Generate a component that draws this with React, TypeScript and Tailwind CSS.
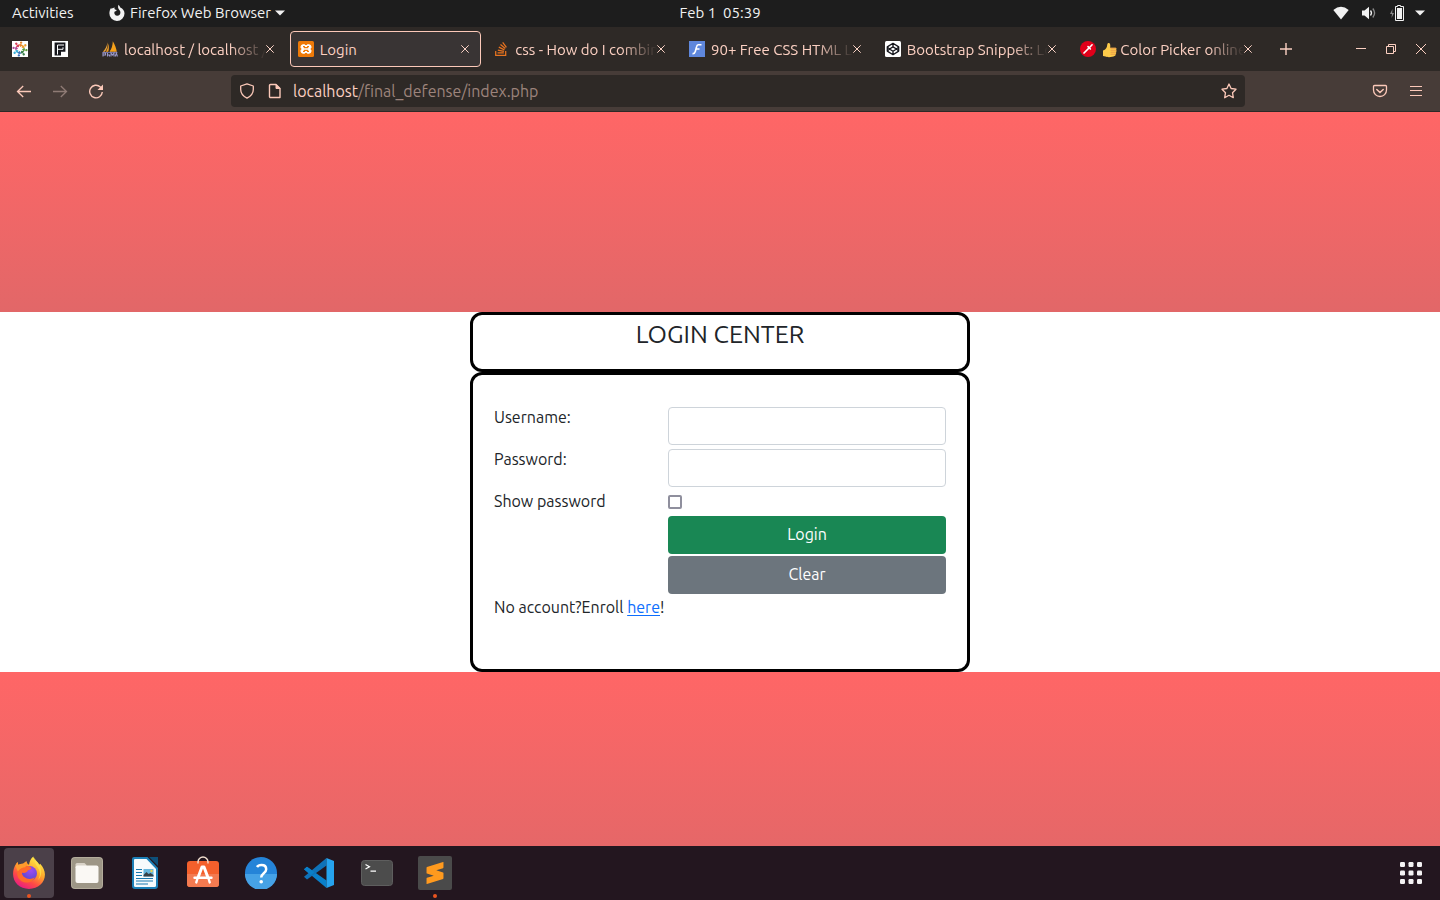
import { useState } from "react";
import type { ReactNode } from "react";
import { FaStackOverflow } from "react-icons/fa";
import { SiSublimetext } from "react-icons/si";

/* ---------- favicons ---------- */

function SlackWheelIcon() {
  const colors = ["#e8862a", "#f0a030", "#5a9a3a", "#3a7f4a", "#3a6fb8", "#3fb0d8", "#b04a9a", "#d8405a"];
  return (
    <svg viewBox="0 0 16 16" className="size-4">
      <rect width="16" height="16" fill="#fff" />
      {colors.map((c, i) => (
        <g key={c} transform={`rotate(${i * 45 + 10} 8 8)`}>
          <path d="M8 6 5.900 3.800 8 2.900l2 .9Z" fill={c} />
          <circle cx="8" cy="1.500" r="1.200" fill={c} />
        </g>
      ))}
    </svg>
  );
}

function LetterFIcon() {
  return (
    <svg viewBox="0 0 16 16" className="size-4">
      <rect width="16" height="16" fill="#fff" />
      <path d="M2.600 1.600h10.800v9.200h-4.400v3.600H2.600Z" fill="#17171c" />
      <path d="M5.500 13.500V4h6.500M5.500 8.300h5.500v-2" fill="none" stroke="#fff" strokeWidth="1" />
    </svg>
  );
}

function SailIcon() {
  return (
    <svg viewBox="0 0 16 16" className="size-4">
      <path d="M5.500 1.200C5.800 4 5.400 8 3 10.800H.8C3.400 8.400 5 5 5.500 1.200Z" fill="#e8a23a" />
      <path d="M6.200 2.500c1 3 .8 6 0 8.300H3.800C5.400 8.500 6.200 5.500 6.200 2.500Z" fill="#f29c1f" />
      <path d="M10.800.2c2 3.400 3.600 7 4 10.600H7.500C9.600 8 10.800 4 10.800.2Z" fill="#f6a11a" />
      <path d="M.5 11.500h15" stroke="#6c6b9c" strokeWidth="1" />
      <path d="M1 15.500v-3.500h2.500v2H1M5.500 12v3.500M5.500 14h2v1.500M9 15.500v-3.500l1.500 2 1.500-2v3.500M13.200 15.500l1.200-3.500 1 3.500" fill="none" stroke="#9a98c8" strokeWidth="1.100" />
    </svg>
  );
}

function XamppIcon() {
  return (
    <svg viewBox="0 0 16 16" className="size-4">
      <rect width="16" height="16" rx="1.500" fill="#ee7a08" />
      <path d="M5 3.800h1.600L8 5l1.400-1.200H11a2 2 0 0 1 2 2v.7L11.800 8 13 9.500v.7a2 2 0 0 1-2 2H9.400L8 11l-1.400 1.200H5a2 2 0 0 1-2-2v-.7L4.200 8 3 6.500v-.7a2 2 0 0 1 2-2Z" fill="#fff" stroke="#fff" strokeWidth="1" />
      <path d="M5 5.500h1.300v1.200h3.400V5.500H11M5 10.500h1.300V9.300h3.400v1.200H11" fill="none" stroke="#f07a05" strokeWidth="1.200" />
    </svg>
  );
}

function ScriptFIcon() {
  return (
    <svg viewBox="0 0 16 16" className="size-4">
      <rect width="16" height="16" fill="#5f87dc" />
      <path d="M12.500 3.800H9.200Q8 3.800 7.500 6L6.300 10.500Q5.700 12.800 3.500 12.600M6.500 8h4" fill="none" stroke="#fff" strokeWidth="1.600" />
    </svg>
  );
}

function CodepenIcon() {
  return (
    <svg viewBox="0 0 16 16" className="size-4">
      <rect width="16" height="16" rx="1.500" fill="#fff" />
      <path d="m8 2.300 5.700 3.600v4.200L8 13.700l-5.700-3.600V5.900Zm0 3.600L11.500 8 8 10.200 4.500 8Zm0-3.600v3.600m0 4.300v3.500M2.300 5.900 4.500 8l-2.200 2.100M13.700 5.900 11.500 8l2.200 2.100" fill="none" stroke="#15161c" strokeWidth="1.300" strokeLinejoin="round" />
    </svg>
  );
}

function DropperIcon() {
  return (
    <svg viewBox="0 0 16 16" className="size-4">
      <circle cx="8" cy="8" r="8" fill="#e1001a" />
      <path d="M4 12 9 7" stroke="#fff" strokeWidth="1.700" strokeLinecap="round" />
      <path d="m8 5.600 2.400 2.400M9.800 6.200l2.300-2.400" stroke="#fff" strokeWidth="1.600" strokeLinecap="round" />
    </svg>
  );
}

function ThumbIcon() {
  return (
    <svg viewBox="0 0 16 16" className="size-4 shrink-0">
      <path d="M1 8.500c2-.4 3-1.800 3.800-3.600C5.400 3.600 5 1.500 6.300 1.100c1.700-.4 2.300 1.500 1.900 4.700h5.200c1.200 0 1.500 1.600.6 2.100.8.500.7 1.800-.1 2.100.6.600.4 1.700-.4 2 .4.800 0 1.800-1 2-2 1.200-7 1.600-9 .5L1 14Z" fill="#fdcb4a" />
      <path d="M8.500 6.300H14M8.500 8.200h5.800M8.500 10.200H14M8.500 12.200h4.800" stroke="#e8964a" strokeWidth=".9" />
    </svg>
  );
}

/* ---------- system bar ---------- */

function CaretDown() {
  return (
    <svg viewBox="0 0 10 6" className="h-[6px] w-[10px]"><path d="M0 .5h10L5 5.500Z" fill="#f2f2f2" /></svg>
  );
}

function SystemBar() {
  return (
    <header className="grid h-[27px] shrink-0 grid-cols-[1fr_auto_1fr] items-center bg-[#1d1d1d] pb-px text-[15px] leading-[26px] text-[#f2f2f2]">
      <div className="flex items-center">
        <button type="button" className="w-[75px] pl-3 text-left">Activities</button>
        <button type="button" className="ml-[33px] flex items-center gap-1 whitespace-nowrap">
          <svg viewBox="0 0 18 18" className="size-[18px]">
            <path d="M10.500.8c.7.900 1.300 1.600 1.800 2.700 2.600 1.100 4.200 3.400 4.200 6A7.500 7.500 0 0 1 9 17 7.400 7.400 0 0 1 1.400 9.500c0-2.200.5-4.100 1.800-5.800l.4 1.200C4.500 4 5.500 3.700 6.800 3.500c-.5.800-.5 1.500.2 2l1.700.5c-.3 1-1.200 1.300-2.300 1.700-.5 2.300.8 4 2.800 4 2.100 0 3.400-1.600 3.200-3.700-.2-1.500-1.400-2-1.900-3.300-.6-1.200-.5-2.500 0-3.900Z" fill="#f2f2f2" />
          </svg>
          Firefox Web Browser
          <CaretDown />
        </button>
      </div>
      <time className="whitespace-pre">Feb 1  05:39</time>
      <div className="flex items-center justify-end gap-[10px] pr-[15px]">
        <div className="flex items-center gap-3">
          <svg viewBox="0 0 16 14" className="h-[14px] w-4"><path d="M.3 4Q8-2.500 15.700 4L8 13.500Z" fill="#f2f2f2" /></svg>
          <svg viewBox="0 0 16 14" className="h-[14px] w-4">
            <path d="M1 4.500h2.500L8 .8v12.400L3.500 9.500H1Z" fill="#f2f2f2" />
            <path d="M9.500 4.500q2 2.500 0 5" fill="none" stroke="#f2f2f2" strokeWidth="1.300" />
            <path d="M11.800 2.500q3.600 4.500 0 9" fill="none" stroke="#8a8a8a" strokeWidth="1.300" />
          </svg>
          <svg viewBox="0 0 16 16" className="size-4">
            <path d="M3.500 4 1 9h2l-.5 4L5 8H3.200Z" fill="#8a8a8a" />
            <path d="M8.500 1.500V.5h3v1h3v14h-8v-14Z" fill="none" stroke="#f2f2f2" />
            <path d="M8 3h5v11H8Z" fill="#f2f2f2" />
          </svg>
        </div>
        <CaretDown />
      </div>
    </header>
  );
}

/* ---------- browser chrome ---------- */

type Tab = { icon: ReactNode; title: string; emoji?: ReactNode; active?: boolean };

const tabs: Tab[] = [
  { icon: <SailIcon />, title: "localhost / localhost /" },
  { icon: <XamppIcon />, title: "Login", active: true },
  { icon: <FaStackOverflow className="size-4 text-[#e8731f]" />, title: "css - How do I combin" },
  { icon: <ScriptFIcon />, title: "90+ Free CSS HTML L" },
  { icon: <CodepenIcon />, title: "Bootstrap Snippet: Lo" },
  { icon: <DropperIcon />, title: "Color Picker online", emoji: <ThumbIcon /> },
];

function CloseMark() {
  return (
    <svg viewBox="0 0 8 8" className="size-2"><path d="m.3.3 7.400 7.400M7.700.3.3 7.700" stroke="#fbd3c6" strokeWidth="1" /></svg>
  );
}

function TabItem({ tab }: { tab: Tab }) {
  return (
    <div className="flex min-w-0 flex-1 px-0.5">
      <div
        className={
          tab.active
            ? "flex h-9 min-w-0 flex-1 items-center rounded-sm border border-[#fcc9b9] bg-[#393434] pr-[11px] pl-[7px]"
            : "flex h-9 min-w-0 flex-1 items-center border border-transparent pr-[11px] pl-[7px]"
        }
      >
        <span className="shrink-0">{tab.icon}</span>
        <button
          type="button"
          className={
            tab.active
              ? "ml-[6px] min-w-0 flex-1 overflow-hidden pt-0.5 text-left whitespace-nowrap"
              : "ml-[6px] flex min-w-0 flex-1 items-center gap-0.5 overflow-hidden pt-0.5 text-left whitespace-nowrap [mask-image:linear-gradient(to_right,black_calc(100%-36px),transparent)]"
          }
        >
          {tab.emoji}
          {tab.title}
        </button>
        <button type="button" aria-label="Close tab" className="shrink-0">
          <CloseMark />
        </button>
      </div>
    </div>
  );
}

function TabStrip() {
  return (
    <div className="flex h-11 shrink-0 items-center bg-[#2e2926] text-[15px] leading-5 text-[#fcd0c2]">
      <button type="button" aria-label="Pinned tab" className="w-10 pl-3"><SlackWheelIcon /></button>
      <button type="button" aria-label="Pinned tab" className="mr-3 w-10 pl-3"><LetterFIcon /></button>
      <div className="flex max-w-[1174px] min-w-0 flex-1">
        {tabs.map((t) => <TabItem key={t.title} tab={t} />)}
      </div>
      <button type="button" aria-label="New tab" className="pl-[14px]">
        <svg viewBox="0 0 12 12" className="size-3"><path d="M6 0v12M0 6h12" stroke="#fcd0c2" strokeWidth="1.400" /></svg>
      </button>
      <div className="ml-auto flex gap-5 pr-[14px]">
        <button type="button" aria-label="Minimize">
          <svg viewBox="0 0 10 10" className="size-[10px]"><path d="M0 4.500h10" stroke="#fcd0c2" /></svg>
        </button>
        <button type="button" aria-label="Restore">
          <svg viewBox="0 0 10 10" className="size-[10px]"><path d="M.5 2.500h7v7h-7ZM2.500 2.500v-2h7v7h-2" fill="none" stroke="#fcd0c2" /></svg>
        </button>
        <button type="button" aria-label="Close window">
          <svg viewBox="0 0 10 10" className="size-[10px]"><path d="m0 0 10 10M10 0 0 10" stroke="#fcd0c2" /></svg>
        </button>
      </div>
    </div>
  );
}

function Toolbar() {
  return (
    <div className="flex h-[41px] shrink-0 items-center border-b border-[#2e2926] bg-[#473c38] text-[#fcc9b9]">
      <div className="flex gap-5 pl-4">
        <button type="button" aria-label="Back">
          <svg viewBox="0 0 16 16" className="size-4"><path d="M15 8.500H1.800M7.200 3 1.500 8.500l5.700 5.500" fill="none" stroke="currentColor" strokeWidth="1.300" /></svg>
        </button>
        <button type="button" aria-label="Forward" disabled>
          <svg viewBox="0 0 16 16" className="size-4"><path d="M1 8.500h13.200M8.800 3l5.700 5.500L8.800 14" fill="none" stroke="#8f7b75" strokeWidth="1.300" /></svg>
        </button>
        <button type="button" aria-label="Reload">
          <svg viewBox="0 0 16 16" className="size-4">
            <path d="M14.300 9a6.300 6.300 0 1 1-2-5.100l1.200 1.300" fill="none" stroke="currentColor" strokeWidth="1.400" />
            <path d="M15 1.500V7H9.500Z" fill="currentColor" />
          </svg>
        </button>
      </div>
      <div className="min-w-4 basis-[127px]" />
      <div className="flex h-8 min-w-0 flex-1 items-center rounded-sm bg-[#2e2926] px-2">
        <svg viewBox="0 0 16 16" className="size-4 shrink-0"><path d="M8 .9 14.300 3v3.500c0 3.600-2.300 6.600-6.300 8.600-4-2-6.300-5-6.300-8.600V3Z" fill="none" stroke="currentColor" strokeWidth="1.300" strokeLinejoin="round" /></svg>
        <svg viewBox="0 0 16 16" className="ml-3 size-4 shrink-0">
          <path d="M3.500 1.500H9l4 4v9H3.500a1 1 0 0 1-1-1v-11a1 1 0 0 1 1-1Z" fill="none" stroke="currentColor" strokeWidth="1.400" strokeLinejoin="round" />
          <path d="M9 1.500v4h4Z" fill="currentColor" stroke="currentColor" />
        </svg>
        <a href="#" className="ml-[10px] min-w-0 flex-1 truncate text-[16px] leading-6 text-[#9d847c]">
          <span className="text-[#fcd0c2]">localhost</span>/final_defense/index.php
        </a>
        <button type="button" aria-label="Bookmark">
          <svg viewBox="0 0 16 16" className="size-4"><path d="m8 1 2.100 4.500 4.900.7-3.500 3.500.8 5L8 12.300l-4.300 2.400.8-5L1 6.200l4.900-.7Z" fill="none" stroke="currentColor" strokeWidth="1.300" strokeLinejoin="round" /></svg>
        </button>
      </div>
      <div className="min-w-4 basis-[127px]" />
      <div className="flex gap-5 pr-4">
        <button type="button" aria-label="Save to Pocket">
          <svg viewBox="0 0 16 16" className="size-4">
            <path d="M2.500 2.500h11a1 1 0 0 1 1 1V7a6.500 6.500 0 0 1-13 0V3.500a1 1 0 0 1 1-1Z" fill="none" stroke="currentColor" strokeWidth="1.300" />
            <path d="M4.800 6.500 8 9.500l3.200-3" fill="none" stroke="currentColor" strokeWidth="1.500" strokeLinecap="round" />
          </svg>
        </button>
        <button type="button" aria-label="Menu">
          <svg viewBox="0 0 16 16" className="size-4"><path d="M2 3.500h12M2 7.500h12M2 12.500h12" stroke="currentColor" strokeWidth="1.200" /></svg>
        </button>
      </div>
    </div>
  );
}

/* ---------- page ---------- */

function LoginPage() {
  const [show, setShow] = useState(false);
  const input = "my-0.5 h-[38px] w-full rounded-sm border border-[#ced4da] bg-white px-3 outline-none";
  return (
    <main className="flex min-h-0 flex-1 flex-col overflow-hidden bg-white text-[#212529]">
      <div className="h-[200px] shrink-0 bg-linear-to-b from-[#ff6666] to-[#e26768]" />
      <section className="mx-auto w-full max-w-[500px] shrink-0">
        <h1 className="h-[60px] rounded-xl border-3 border-black pt-1 text-center text-[25px] leading-[30px]">LOGIN CENTER</h1>
        <form className="min-h-[300px] rounded-xl border-3 border-black px-[21px] pt-[30px] text-[16px] leading-6" onSubmit={(e) => e.preventDefault()}>
          <div className="grid grid-cols-[174px_1fr] items-start">
            <label htmlFor="username">Username:</label>
            <input id="username" type="text" className={input} />
            <label htmlFor="password">Password:</label>
            <input id="password" type={show ? "text" : "password"} className={input} />
            <label htmlFor="show">Show password</label>
            <input
              id="show"
              type="checkbox"
              checked={show}
              onChange={(e) => setShow(e.target.checked)}
              className="mt-[6px] size-[14px] appearance-none rounded-xs border-2 border-[#8f8f9d] bg-white checked:bg-[#0d6efd]"
            />
          </div>
          <div className="ml-[174px] flex flex-col gap-0.5 pt-[3px] pb-px text-white">
            <button type="submit" className="h-[38px] rounded-sm bg-[#198754] pb-0.5">Login</button>
            <button type="reset" className="h-[38px] rounded-sm bg-[#6c757d] pb-0.5">Clear</button>
          </div>
          <p>No account?Enroll <a href="#" className="text-[#0d6efd] underline underline-offset-2">here</a>!</p>
        </form>
      </section>
      <div className="min-h-0 flex-1 bg-linear-to-b from-[#ff6666] to-[#e26768] bg-[length:100%_200px]" />
    </main>
  );
}

/* ---------- dock ---------- */

function FirefoxIcon() {
  return (
    <svg viewBox="0 0 32 32" className="size-[34px]">
      <defs>
        <linearGradient id="fx" x1="0.800" y1="0.050" x2="0.250" y2="1">
          <stop offset="0" stopColor="#fff14a" />
          <stop offset="0.400" stopColor="#ffa52a" />
          <stop offset="0.700" stopColor="#ff4a46" />
          <stop offset="1" stopColor="#e5178a" />
        </linearGradient>
        <radialGradient id="fxg" cx="0.600" cy="0.300" r="0.700">
          <stop offset="0" stopColor="#a04af0" />
          <stop offset="1" stopColor="#5848d0" />
        </radialGradient>
      </defs>
      <path d="M20 .5c.5 2 2 3.500 4 5.300.8.700 1.200 1.500 1.500 2.500l1-1c2.800 3 4.500 6.500 4.500 10.200C31 25.300 24.500 31 16 31S1 25 1 17c0-3.500 1-7 3-10l1.200-1.300.8 2.700c1.500-1 3-1.300 4.500-1.200L13.500 5c.3 2 1 2.700 2.500 3.500C16.500 5 17.500 2.500 20 .5Z" fill="url(#fx)" />
      <circle cx="16.500" cy="16.500" r="7" fill="url(#fxg)" />
      <path d="M5.500 13c2-3.500 5.500-4.500 9-3.700 2.500.3 3.500 1.200 3.700 2.200-.3 1-1.700 1.500-3.200 2-1 2.800-4.500 3-6.500 1.800 1.500 5.500 8 8.200 13 4.700-2 6.500-13 7-16-.5-.8-2-.8-4.500 0-6.500Z" fill="#ff6a2a" />
      <path d="M3.300 9.500 5.200 5.700l.8 2.700c1.500-1 3-1.300 4.500-1.200L13.500 5c.3 2 1 2.700 2.500 3.500-2 .2-3 1-3.500 2-2.500 0-5 1-7 4Z" fill="#ff9a2c" />
      <path d="M21 1.500c1 3.500 6.500 6 6.500 13.500 0 3-1 5.500-3 7.500 6-10-4-11.500-3.500-21Z" fill="#ffe14a" opacity=".8" />
    </svg>
  );
}

function FilesIcon() {
  return (
    <svg viewBox="0 0 32 32" className="size-8">
      <rect width="32" height="32" rx="4" fill="#b3ac9b" />
      <rect x="1" y="1" width="30" height="30" rx="3" fill="#9d9686" />
      <path d="M4.500 7.500a1.500 1.500 0 0 1 1.500-1.500h7.500L15.500 8v3h-11Z" fill="#d9d3c8" />
      <rect x="4.500" y="8.500" width="23" height="17.500" rx="2" fill="#faf8f4" />
    </svg>
  );
}

function WriterIcon() {
  return (
    <svg viewBox="0 0 32 32" className="size-8">
      <path d="M5 0h13.500L29 11v18a3 3 0 0 1-3 3H6a3 3 0 0 1-3-3V2a2 2 0 0 1 2-2Z" fill="#1c80b8" />
      <path d="M6 2h11.500L27 12v16.500A1.500 1.500 0 0 1 25.500 30h-19A1.500 1.500 0 0 1 5 28.500v-26Z" fill="#f6fafc" />
      <path d="M20 0h9v9Z" fill="#0d4f7a" />
      <path d="M7 12.500h6M7 15.500h6M7 18.500h6M7 21.500h17M7 24h17M7 27h12" stroke="#1878b0" strokeWidth="1.200" />
      <rect x="14.500" y="12" width="10" height="7.500" fill="#66b5dc" />
      <path d="m14.500 18 3-3 2 2 2-1 3 2v1.500h-10Z" fill="#364047" />
      <circle cx="22.500" cy="14" r="1.200" fill="#f0d24a" />
    </svg>
  );
}

function SoftwareIcon() {
  return (
    <svg viewBox="0 0 32 34" className="h-[34px] w-8">
      <rect y="5" width="32" height="26" rx="3" fill="#f4602c" />
      <path d="M0 18h32v10a3 3 0 0 1-3 3H3a3 3 0 0 1-3-3Z" fill="#f37a50" />
      <path d="M11 7.500V6a5 5 0 0 1 10 0v1.500" fill="none" stroke="#f3dfd0" strokeWidth="1.400" />
      <path d="m10.500 23 4.500-12h2l4.500 12" fill="none" stroke="#fff" strokeWidth="3" strokeLinejoin="round" />
      <path d="M7.500 21.800h17M10 24l-.7 2.400M22 24l.7 2.400" stroke="#fff" strokeWidth="2.400" strokeLinecap="round" />
    </svg>
  );
}

function HelpIcon() {
  return (
    <svg viewBox="0 0 32 32" className="size-8">
      <circle cx="16" cy="16" r="16" fill="#2584d8" />
      <path d="M0 17h32a16 16 0 0 1-32 0Z" fill="#46a2e6" />
      <path d="M12 10c1-1.600 2.500-2 4.500-2 3 0 4.700 1.700 4.700 4.200 0 4-5 4-5 8.300" fill="none" stroke="#fff" strokeWidth="2.500" />
      <circle cx="16.200" cy="24.700" r="1.800" fill="#fff" />
    </svg>
  );
}

function CodeIcon() {
  return (
    <svg viewBox="0 0 32 32" className="size-8">
      <path d="M1 12.200 4 9.800 23.500 23.500V31Z" fill="#0a7fc9" />
      <path d="M1 19.800 4 22.400 23.500 8.500V1Z" fill="#0f72b8" />
      <path d="M1 12.200 4 9.800l7.500 5.500-3.600 2.900Z" fill="#0a7fc9" />
      <path d="M23.500 1 31 4v24l-7.500 3Z" fill="#26a3ee" />
    </svg>
  );
}

function TerminalIcon() {
  return (
    <svg viewBox="0 0 32 26" className="h-[26px] w-8">
      <rect x=".5" y=".5" width="31" height="25" rx="3" fill="#4c4c4c" stroke="#5e5e5e" />
      <path d="m4.500 4.500 4 2.200-4 2.300M9.500 11.200H15" fill="none" stroke="#fff" strokeWidth="1.200" />
    </svg>
  );
}

function SublimeTile() {
  return (
    <span className="flex size-[34px] items-center justify-center rounded-xs bg-[#4a4a4a]">
      <SiSublimetext className="size-[22px] text-[#ff9a1e]" />
    </span>
  );
}

const dockItems: { label: string; icon: ReactNode; running?: boolean; focused?: boolean }[] = [
  { label: "Firefox", icon: <FirefoxIcon />, running: true, focused: true },
  { label: "Files", icon: <FilesIcon /> },
  { label: "Writer", icon: <WriterIcon /> },
  { label: "Software", icon: <SoftwareIcon /> },
  { label: "Help", icon: <HelpIcon /> },
  { label: "Code", icon: <CodeIcon /> },
  { label: "Terminal", icon: <TerminalIcon /> },
  { label: "Sublime Text", icon: <SublimeTile />, running: true },
];

function Dock() {
  return (
    <nav className="flex h-[54px] shrink-0 items-center justify-between bg-[#23161f] px-1">
      <div className="flex gap-2">
        {dockItems.map((item) => (
          <button
            key={item.label}
            type="button"
            aria-label={item.label}
            className={
              item.focused
                ? "relative flex size-[50px] items-center justify-center rounded-sm bg-[#4b4049]"
                : "relative flex size-[50px] items-center justify-center rounded-sm"
            }
          >
            {item.icon}
            {item.running && <span className="absolute bottom-0 left-[23px] size-1 rounded-full bg-[#e95420]" />}
          </button>
        ))}
      </div>
      <button type="button" aria-label="Show applications" className="flex size-[50px] items-center justify-center">
        <svg viewBox="0 0 22 22" className="size-[22px]">
          {[0, 8.5, 17].map((y) => [0, 8.5, 17].map((x) => (
            <rect key={`${x}-${y}`} x={x} y={y} width="5" height="5" rx="1.200" fill="#f4f2f3" />
          )))}
        </svg>
      </button>
    </nav>
  );
}

export default function App() {
  return (
    <div className="flex h-screen flex-col font-['Ubuntu','Noto_Sans',sans-serif]">
      <SystemBar />
      <TabStrip />
      <Toolbar />
      <LoginPage />
      <Dock />
    </div>
  );
}
